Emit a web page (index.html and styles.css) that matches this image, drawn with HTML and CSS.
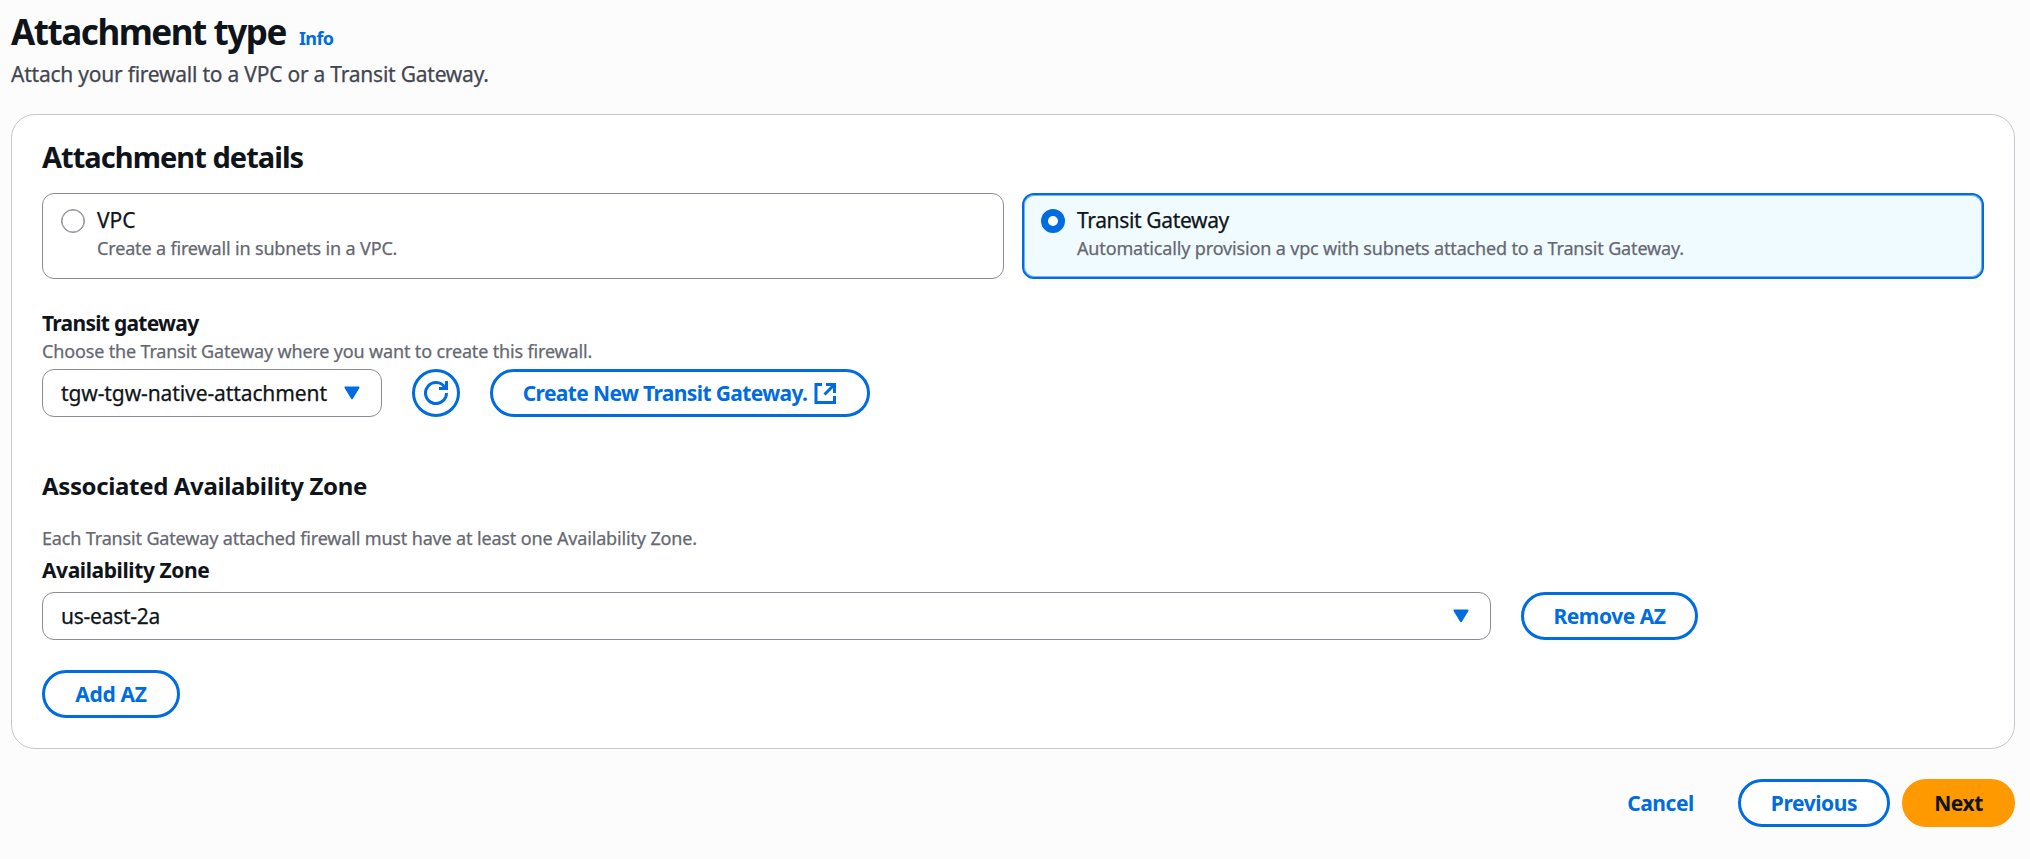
FILE: index.html
```
<!DOCTYPE html>
<html lang="en">
<head>
<meta charset="utf-8">
<title>Attachment type</title>
<link rel="stylesheet" href="styles.css">
</head>
<body>
<main class="page">
  <header class="page-header">
    <div class="title-row">
      <h1 class="page-title">Attachment type</h1>
      <a class="info">Info</a>
    </div>
    <p class="subtitle">Attach your firewall to a VPC or a Transit Gateway.</p>
  </header>

  <section class="card">
    <h2 class="card-title">Attachment details</h2>
    <div class="tiles">
      <label class="tile">
        <span class="radio"></span>
        <span class="tile-text">
          <span class="tile-label vpc">VPC</span>
          <span class="hint">Create a firewall in subnets in a VPC.</span>
        </span>
      </label>
      <label class="tile selected">
        <span class="radio checked"></span>
        <span class="tile-text">
          <span class="tile-label">Transit Gateway</span>
          <span class="hint">Automatically provision a vpc with subnets attached to a Transit Gateway.</span>
        </span>
      </label>
    </div>

    <div class="field-label gateway-label">Transit gateway</div>
    <div class="hint gateway-hint">Choose the Transit Gateway where you want to create this firewall.</div>
    <div class="row">
      <div class="select gateway-select">
        <span class="value">tgw-tgw-native-attachment</span>
        <svg class="caret" viewBox="0 0 16 14"><path d="M2.200 2.200h11.600L8 11.800z"/></svg>
      </div>
      <button class="btn icon-btn" aria-label="Refresh">
        <svg class="refresh" viewBox="0 0 24 24"><path d="M22.500 12A10.500 10.500 0 1 1 20.800 6.300M22.500 0v7.500H15"/></svg>
      </button>
      <button class="btn create-btn">
        <span>Create New Transit Gateway.</span>
        <svg class="external" viewBox="0 0 24 24"><path d="M9 3.500H3v18h18.500V15M13 3.500h8.500V12M21 4L11.500 13.500"/></svg>
      </button>
    </div>

    <h3 class="section-title">Associated Availability Zone</h3>
    <div class="hint zone-hint">Each Transit Gateway attached firewall must have at least one Availability Zone.</div>
    <div class="field-label zone-label">Availability Zone</div>
    <div class="row">
      <div class="select zone-select">
        <span class="value">us-east-2a</span>
        <svg class="caret" viewBox="0 0 16 14"><path d="M2.200 2.200h11.600L8 11.800z"/></svg>
      </div>
      <button class="btn remove-btn">Remove AZ</button>
    </div>
    <button class="btn add-btn">Add AZ</button>
  </section>

  <footer class="actions">
    <button class="btn link-btn">Cancel</button>
    <button class="btn previous-btn">Previous</button>
    <button class="btn primary-btn">Next</button>
  </footer>
</main>
</body>
</html>
```

FILE: styles.css
```
* { box-sizing: border-box; }

body {
  margin: 0;
  min-height: 859px;
  background: #fcfcfd;
  color: #0f141a;
  font: 400 21px/30px "Noto Sans", "Open Sans", sans-serif;
}

h1, h2, h3, p { margin: 0; }

.page { padding: 9px 15px 0 11px; }

.title-row {
  display: flex;
  align-items: baseline;
  gap: 13px;
  height: 45px;
}

.page-title {
  font-size: 35px;
  line-height: 45px;
  letter-spacing: -1.45px;
}

.info {
  color: #006ce0;
  font-size: 18px;
  font-weight: 700;
  line-height: 24px;
  letter-spacing: -0.6px;
}

.subtitle {
  margin-top: 5px;
  color: #424650;
  letter-spacing: -0.23px;
}

.subtitle, .tile-label, .hint, .value { -webkit-text-stroke: 0.25px currentColor; }

.card {
  margin-top: 25px;
  padding: 24px 30px 30px;
  border: 1px solid #c6c6cd;
  border-radius: 24px;
  background: #fff;
}

.card-title {
  font-size: 29px;
  line-height: 36px;
  letter-spacing: -0.96px;
}

.tiles {
  display: grid;
  grid-template-columns: 1fr 1fr;
  gap: 18px;
  margin-top: 18px;
}

.tile {
  display: flex;
  gap: 12px;
  height: 86px;
  padding: 11px 18px;
  border: 1px solid #8c8c94;
  border-radius: 12px;
}

.tile.selected {
  padding: 10px 17px;
  border: 2px solid #006ce0;
  background: #f0fbff;
  box-shadow: inset 0 0 0 1px #78b3ef;
}

.radio {
  width: 24px;
  height: 24px;
  margin-top: 4px;
  border: 1px solid #8c8c94;
  border-radius: 50%;
  background: #fff;
  box-shadow: inset 0 0 0 0.5px #8c8c94;
}

.radio.checked { border: 7px solid #006ce0; box-shadow: none; }

.tile-text { display: flex; flex-direction: column; gap: 1px; }
.tile-label { letter-spacing: -0.35px; }
.tile-label.vpc { letter-spacing: 0; }

.hint {
  color: #656871;
  font-size: 18px;
  line-height: 24px;
  letter-spacing: -0.155px;
}

.field-label { font-weight: 700; }
.gateway-label { margin-top: 29px; letter-spacing: -0.72px; }
.gateway-hint { margin: 1px 0 6px; }

.row { display: flex; gap: 30px; }

.select {
  display: flex;
  align-items: center;
  justify-content: space-between;
  height: 48px;
  padding: 0 20px 0 18px;
  border: 1px solid #8c8c94;
  border-radius: 12px;
  background: #fff;
  letter-spacing: -0.1px;
}

.gateway-select { width: 340px; }
.zone-select { width: 1449px; letter-spacing: -0.25px; }

.caret {
  width: 18px;
  height: 15.75px;
  fill: #006ce0;
  stroke: #006ce0;
  stroke-width: 1.8;
  stroke-linejoin: round;
}

.btn {
  display: flex;
  align-items: center;
  justify-content: center;
  height: 48px;
  padding: 0;
  border: 3px solid #006ce0;
  border-radius: 24px;
  background: #fff;
  color: #006ce0;
  font: 700 21px/30px "Noto Sans", "Open Sans", sans-serif;
  letter-spacing: -0.45px;
  white-space: nowrap;
}

.icon-btn { width: 48px; }
.create-btn { width: 380px; gap: 6px; letter-spacing: -0.63px; }
.remove-btn { width: 177px; }
.add-btn { width: 138px; margin-top: 30px; letter-spacing: -0.3px; }

.refresh, .external {
  width: 24px;
  height: 24px;
  fill: none;
  stroke: #006ce0;
  stroke-width: 3;
}

.section-title {
  margin-top: 54px;
  font-size: 24px;
  line-height: 30px;
  letter-spacing: -0.36px;
}

.zone-hint { margin-top: 25px; }
.zone-label { margin: 5px 0 7px; letter-spacing: -0.41px; }

.actions {
  display: flex;
  justify-content: flex-end;
  margin-top: 30px;
}

.link-btn {
  width: 119px;
  margin-right: 18px;
  border-color: transparent;
  background: transparent;
}

.previous-btn { width: 152px; margin-right: 12px; letter-spacing: -0.42px; }

.primary-btn {
  width: 113px;
  border-color: #ff9900;
  background: #ff9900;
  color: #0f141a;
}
```
